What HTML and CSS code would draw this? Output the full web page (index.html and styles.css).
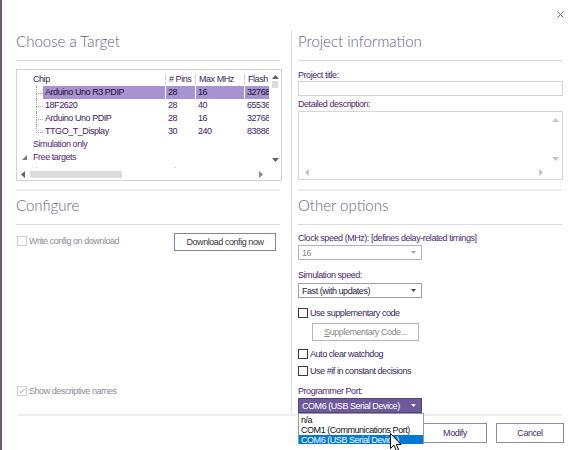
FILE: index.html
```html
<!DOCTYPE html>
<html>
<head>
<meta charset="utf-8">
<link rel="stylesheet" href="styles.css">
</head>
<body>
<div class="window">
  <div class="titlebar">
    <svg class="close" width="7" height="7" viewBox="0 0 7 7"><path d="M0.5 0.5L6.5 6.5M6.5 0.5L0.5 6.5" stroke="#6d6d6d" stroke-width="1"/></svg>
  </div>
  <div class="dialog">
    <section class="cell left top">
      <h2 class="heading">Choose a Target</h2>
      <div class="tree">
        <div class="tree-body">
          <div class="thead">
            <div class="th chip">Chip</div>
            <div class="th">#&nbsp;Pins</div>
            <div class="th">Max MHz</div>
            <div class="th">Flash</div>
          </div>
          <div class="leaves">
            <div class="row leaf selected"><div class="td">Arduino Uno R3 PDIP</div><div class="td">28</div><div class="td">16</div><div class="td">32768</div></div>
            <div class="row leaf"><div class="td">18F2620</div><div class="td">28</div><div class="td">40</div><div class="td">65536</div></div>
            <div class="row leaf"><div class="td">Arduino Uno PDIP</div><div class="td">28</div><div class="td">16</div><div class="td">32768</div></div>
            <div class="row leaf last"><div class="td">TTGO_T_Display</div><div class="td">30</div><div class="td">240</div><div class="td">83886</div></div>
          </div>
          <div class="node">Simulation only</div>
          <div class="node"><svg class="expander" width="5" height="5" viewBox="0 0 5 5"><polygon points="5,0 5,5 0,5" fill="#7a7a7a"/></svg>Free targets</div>
          <div class="node stub"><span class="dot d1"></span><span class="dot d2"></span></div>
        </div>
        <div class="vscroll">
          <svg width="7" height="4" viewBox="0 0 7 4"><polygon points="0,4 3.5,0 7,4" fill="#606060"/></svg>
          <div class="vthumb"></div>
          <svg class="vdown" width="7" height="4" viewBox="0 0 7 4"><polygon points="0,0 7,0 3.5,4" fill="#606060"/></svg>
        </div>
        <div class="hscroll">
          <svg width="4" height="7" viewBox="0 0 4 7"><polygon points="4,0 4,7 0,3.5" fill="#606060"/></svg>
          <div class="hthumb"></div>
          <svg class="hright" width="4" height="7" viewBox="0 0 4 7"><polygon points="0,0 4,3.5 0,7" fill="#8a8a8a"/></svg>
        </div>
        <div class="corner"></div>
      </div>
      <div class="sep"></div>
    </section>

    <section class="cell right top">
      <h2 class="heading">Project information</h2>
      <div class="lbl l-title">Project title:</div>
      <div class="input"></div>
      <div class="lbl l-desc">Detailed description:</div>
      <div class="textarea">
        <div class="ta-body"></div>
        <div class="ta-v">
          <svg width="7" height="4" viewBox="0 0 7 4"><polygon points="0,4 3.5,0 7,4" fill="#c4c4c4"/></svg>
          <svg width="7" height="4" viewBox="0 0 7 4"><polygon points="0,0 7,0 3.5,4" fill="#c4c4c4"/></svg>
        </div>
        <div class="ta-h">
          <svg width="4" height="7" viewBox="0 0 4 7"><polygon points="4,0 4,7 0,3.5" fill="#c4c4c4"/></svg>
          <svg width="4" height="7" viewBox="0 0 4 7"><polygon points="0,0 4,3.5 0,7" fill="#c4c4c4"/></svg>
        </div>
      </div>
      <div class="sep"></div>
    </section>

    <section class="cell left bottom">
      <h2 class="heading">Configure</h2>
      <div class="config-row">
        <div class="check disabled"><span class="cb"></span><span class="cbl">Write config on download</span></div>
        <button class="btn dl">Download config now</button>
      </div>
      <div class="check disabled show-names"><span class="cb"><svg width="8" height="8" viewBox="0 0 8 8"><path d="M1.5 4.2L3.2 5.8L6.6 2" fill="none" stroke="#a0a0a0" stroke-width="1"/></svg></span><span class="cbl">Show descriptive names</span></div>
    </section>

    <section class="cell right bottom">
      <h2 class="heading">Other options</h2>
      <div class="lbl l-clock">Clock speed (MHz): [defines delay-related timings]</div>
      <div class="combo disabled"><span>16</span><svg width="5" height="3" viewBox="0 0 5 3"><polygon points="0,0 5,0 2.5,3" fill="#a8a8a8"/></svg></div>
      <div class="lbl l-sim">Simulation speed:</div>
      <div class="combo"><span>Fast (with updates)</span><svg width="5" height="3" viewBox="0 0 5 3"><polygon points="0,0 5,0 2.5,3" fill="#444"/></svg></div>
      <div class="check c-supp"><span class="cb"></span><span class="cbl">Use supplementary code</span></div>
      <button class="btn supp"><u>S</u>upplementary Code...</button>
      <div class="check c-wd"><span class="cb"></span><span class="cbl">Auto clear watchdog</span></div>
      <div class="check c-if"><span class="cb"></span><span class="cbl">Use #if in constant decisions</span></div>
      <div class="lbl l-port">Programmer Port:</div>
      <div class="combo active"><span>COM6 (USB Serial Device)</span><svg width="5" height="3" viewBox="0 0 5 3"><polygon points="0,0 5,0 2.5,3" fill="#ffffff"/></svg></div>
    </section>
  </div>
  <div class="footer">
    <button class="btn fb modify">Modify</button>
    <button class="btn fb cancel">Cancel</button>
  </div>

  <div class="dropdown">
    <div class="opt">n/a</div>
    <div class="opt">COM1 (Communications Port)</div>
    <div class="opt sel">COM6 (USB Serial Device)</div>
  </div>
  <svg class="cursor" width="12" height="19" viewBox="0 0 12 19"><path d="M0.5 0.5L0.5 15.5L4 12.2L6.3 17.6L8.6 16.6L6.3 11.4L11 11.4Z" fill="#ffffff" stroke="#000000" stroke-width="1" stroke-linejoin="round"/></svg>
</div>
</body>
</html>
```

FILE: styles.css
```css
* { box-sizing: border-box; }
html, body { margin: 0; padding: 0; background: #ffffff; }
body {
  font-family: "Liberation Sans", Arial, sans-serif;
  font-size: 9px;
  letter-spacing: -0.45px;
  line-height: 12px;
  color: #36275a;
}
.window {
  position: relative;
  width: 572px;
  height: 450px;
  border-left: 2px solid #6a5d78;
  overflow: hidden;
}
.titlebar {
  height: 30px;
  display: flex;
  justify-content: flex-end;
  align-items: flex-start;
}
.close { margin: 11px 8px 0 0; }

.dialog {
  display: grid;
  grid-template-columns: 289px 281px;
  grid-template-rows: 161px 223px;
}
.cell { display: flex; flex-direction: column; }
.cell.left { padding: 0 9px 0 14px; }
.cell.right { border-left: 1px solid #e2dce6; padding: 0 9px 0 6px; }
.cell.bottom { padding-top: 3px; }

.heading {
  margin: 0 2px 0 0;
  font-family: "Lato", "Open Sans", sans-serif;
  font-weight: 300;
  font-size: 15px;
  letter-spacing: 0;
  line-height: 22px;
  height: 31px;
  padding: 0 0 8px 0;
  color: #665f8e;
  border-bottom: 1px solid #dcd6df;
}
.cell.right .heading { margin-right: 1px; }
.sep {
  margin-top: auto;
  height: 2px;
  background: #ededed;
  margin-right: 2px;
}
.cell.right .sep { margin-right: 1px; }

/* tree */
.tree {
  margin-top: 8px;
  height: 112px;
  border: 1px solid #d2d2d2;
  display: grid;
  grid-template-columns: 1fr 12px;
  grid-template-rows: 1fr 12px;
}
.tree-body { overflow: hidden; position: relative; }
.thead {
  height: 16px;
  display: grid;
  grid-template-columns: 148px 30px 49px 1fr;
  color: #36275a;
}
.th {
  margin-top: 4px;
  height: 10px;
  line-height: 10px;
  padding-left: 3px;
  border-left: 1px solid #d8d8d8;
  white-space: nowrap;
  overflow: hidden;
}
.th.chip { border-left: 0; padding-left: 16px; }
.row {
  height: 13px;
  line-height: 13px;
  display: grid;
  grid-template-columns: 122px 30px 49px 1fr;
  color: #3d2466;
}
.td { padding-left: 2px; border-left: 1px solid transparent; white-space: nowrap; overflow: hidden; }
.row .td:first-child { border-left: 0; }
.row.selected { background: #a792d2; color: #1e1434; }
.row.selected .td { border-left-color: #ffffff; }
.row.selected .td:first-child { border-left: 0; }
.leaf { position: relative; margin-left: 26px; }
.leaf::before {
  content: "";
  position: absolute;
  left: -7px;
  top: 0;
  width: 6px;
  height: 7px;
  border-left: 1px dotted #a8a8a8;
  border-bottom: 1px dotted #a8a8a8;
}
.leaf::after {
  content: "";
  position: absolute;
  left: -7px;
  top: 7px;
  height: 6px;
  border-left: 1px dotted #a8a8a8;
}
.leaf.last::after { display: none; }
.node {
  height: 13px;
  line-height: 13px;
  padding-left: 16px;
  color: #52257c;
  display: flex;
  align-items: center;
}
.expander { margin-left: -11px; margin-right: 6px; }
.node.stub { height: 5px; }
.dot { width: 1px; height: 2px; background: #c8c8c8; margin-top: 2px; }
.d1 { margin-left: 3px; }
.d2 { margin-left: 138px; }

.vscroll {
  display: flex;
  flex-direction: column;
  align-items: center;
  padding-top: 5px;
}
.vthumb { width: 6px; height: 7px; background: #dcdcdc; margin-top: 2px; }
.vdown { margin-top: auto; margin-bottom: 6px; }
.hscroll {
  display: flex;
  align-items: center;
  padding-left: 4px;
}
.hthumb { width: 92px; height: 7px; background: #dcdcdc; margin-left: 5px; }
.hright { margin-left: auto; margin-right: 6px; }
.corner { background: #ffffff; }

/* right top */
.lbl { color: #4c1f74; white-space: nowrap; height: 12px; }
.l-title { margin-top: 8px; }
.input { height: 15px; border: 1px solid #d6d6d6; }
.l-desc { margin-top: 2px; }
.textarea {
  margin-top: 1px;
  height: 69px;
  border: 1px solid #d6d6d6;
  display: grid;
  grid-template-columns: 1fr 14px;
  grid-template-rows: 1fr 14px;
}
.ta-v {
  display: flex;
  flex-direction: column;
  justify-content: space-between;
  align-items: center;
  padding: 6px 0 4px 0;
  grid-row: 1;
  grid-column: 2;
}
.ta-h {
  display: flex;
  justify-content: space-between;
  align-items: center;
  padding: 0 5px 0 6px;
  grid-row: 2;
  grid-column: 1;
}

/* checks */
.check { display: flex; align-items: center; height: 12px; white-space: nowrap; }
.cb {
  width: 10px;
  height: 10px;
  border: 1px solid #3a3a3a;
  background: #fff;
  margin-right: 2px;
  display: flex;
  align-items: center;
  justify-content: center;
  flex: none;
}
.check.disabled .cb { border-color: #cfcfcf; margin-left: 1px; }
.check.disabled .cbl { color: #8e8a96; }
.cbl { color: #36275a; }

.btn {
  font-family: inherit;
  font-size: 9px;
  letter-spacing: -0.45px;
  background: #ffffff;
  border: 1px solid #8d7fa0;
  color: #3a3a3a;
  padding: 0;
  height: 18px;
  line-height: 16px;
  border-radius: 0;
  white-space: nowrap;
}
.config-row {
  margin-top: 8px;
  display: flex;
  justify-content: space-between;
  align-items: flex-start;
  margin-right: 6px;
}
.config-row .check { margin-top: 2px; }
.btn.dl { width: 102px; }
.show-names { margin-top: auto; margin-bottom: 17px; }

.l-clock { margin-top: 7px; }
.combo {
  width: 124px;
  height: 15px;
  border: 1px solid #a0a0a0;
  display: flex;
  align-items: center;
  justify-content: space-between;
  padding: 0 5px 0 3px;
  color: #2a2240;
  margin-top: 1px;
  white-space: nowrap;
}
.combo.disabled { color: #8a8a8a; border-color: #b4b4b4; }
.l-sim { margin-top: 9px; }
.l-sim + .combo { margin-top: 2px; }
.c-supp { margin-top: 9px; }
.btn.supp { width: 107px; margin-left: 14px; margin-top: 4px; color: #8a8a8a; border-color: #b9b2c2; }
.c-wd { margin-top: 7px; }
.c-if { margin-top: 5px; }
.l-port { margin-top: 8px; }
.combo.active { background: #6e5a9b; border-color: #54427a; color: #ffffff; }

.footer {
  margin: 0 10px 0 16px;
  border-top: 2px solid #ededed;
  display: flex;
  justify-content: flex-end;
  gap: 9px;
  padding-top: 7px;
}
.fb { height: 20px; color: #4a2a72; border-color: #9585a8; }
.modify { width: 64px; }
.cancel { width: 68px; margin-right: -2px; }

.dropdown {
  position: absolute;
  left: 296px;
  top: 413px;
  width: 126px;
  height: 31px;
  background: #ffffff;
  border: 1px solid #9a9a9a;
  padding: 1px 0 0 0;
  color: #111111;
}
.opt { height: 10px; line-height: 10px; padding-left: 2px; white-space: nowrap; }
.opt.sel { background: #0078d7; color: #ffffff; height: 9px; }
.cursor { position: absolute; left: 388px; top: 433px; }
```
